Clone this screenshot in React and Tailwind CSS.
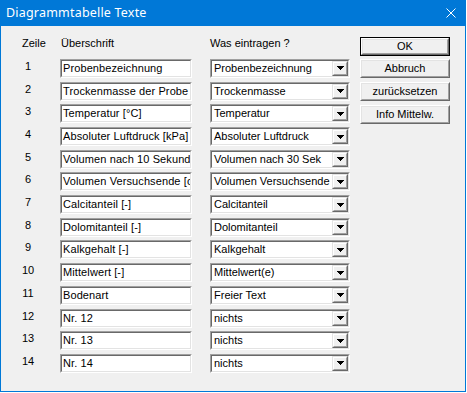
import React from "react";

const rows = [
  ["Probenbezeichnung", "Probenbezeichnung"],
  ["Trockenmasse der Probe [g]", "Trockenmasse"],
  ["Temperatur [°C]", "Temperatur"],
  ["Absoluter Luftdruck [kPa]", "Absoluter Luftdruck"],
  ["Volumen nach 10 Sekunden [cm³]", "Volumen nach 30 Sek"],
  ["Volumen Versuchsende [cm³]", "Volumen Versuchsende"],
  ["Calcitanteil [-]", "Calcitanteil"],
  ["Dolomitanteil [-]", "Dolomitanteil"],
  ["Kalkgehalt [-]", "Kalkgehalt"],
  ["Mittelwert [-]", "Mittelwert(e)"],
  ["Bodenart", "Freier Text"],
  ["Nr. 12", "nichts"],
  ["Nr. 13", "nichts"],
  ["Nr. 14", "nichts"],
];

const buttons = ["OK", "Abbruch", "zurücksetzen", "Info Mittelw."];

function Sunken({ width, children }) {
  return (
    <div
      className={`h-[19px] ${width} border border-t-[#a0a0a0] border-l-[#a0a0a0] border-b-white border-r-white`}
    >
      <div className="h-full border border-t-[#696969] border-l-[#696969] border-b-[#e3e3e3] border-r-[#e3e3e3] bg-white flex">
        {children}
      </div>
    </div>
  );
}

function TextInput({ value }) {
  return (
    <Sunken width="w-[132px]">
      <div className="flex-1 min-w-0 pl-[1px] leading-[15px] overflow-hidden whitespace-nowrap tracking-[0.1px]">
        {value}
      </div>
    </Sunken>
  );
}

function Arrow() {
  return (
    <svg width="7" height="4" viewBox="0 0 7 4" shapeRendering="crispEdges">
      <path d="M0 0h7v1h-1v1h-1v1h-1v1h-1v-1h-1v-1h-1v-1h-1z" fill="#000" />
    </svg>
  );
}

function Select({ value }) {
  return (
    <Sunken width="w-[140px]">
      <div className="flex-1 min-w-0 pl-[2px] leading-[15px] overflow-hidden whitespace-nowrap">
        {value}
      </div>
      <div className="w-[16px] shrink-0 h-full border border-t-[#e3e3e3] border-l-[#e3e3e3] border-b-[#696969] border-r-[#696969]">
        <div className="h-full border border-t-white border-l-white border-b-[#a0a0a0] border-r-[#a0a0a0] bg-[#f0f0f0] flex items-center justify-center">
          <Arrow />
        </div>
      </div>
    </Sunken>
  );
}

function Button({ label, isDefault }) {
  const inner = (
    <div className="h-full border border-t-white border-l-white border-b-[#696969] border-r-[#696969]">
      <div className="h-full border border-t-[#e3e3e3] border-l-[#e3e3e3] border-b-[#a0a0a0] border-r-[#a0a0a0] bg-[#f0f0f0] flex items-center justify-center leading-[13px]">
        {label}
      </div>
    </div>
  );
  if (isDefault) {
    return <div className="w-[90px] h-[19px] border border-[#000]">{inner}</div>;
  }
  return <div className="w-[90px] h-[19px]">{inner}</div>;
}

export default function App() {
  return (
    <div
      className="w-[467px] h-[393px] bg-white text-[11px] text-black"
      style={{ fontFamily: '"Liberation Sans", Arial, sans-serif' }}
    >
      <div className="w-[466px] h-[392px] bg-[#0078d7] flex flex-col">
        <div className="h-[26px] flex items-center justify-between pl-[6px] pr-[10px] text-white">
          <span
            className="text-[12.5px] tracking-[0.2px] leading-[16px]"
            style={{ fontFamily: '"Noto Sans", "Liberation Sans", sans-serif' }}
          >
            Diagrammtabelle Texte
          </span>
          <svg width="10" height="10" viewBox="0 0 10 10">
            <path d="M0.5 0.5L9.5 9.5M9.5 0.5L0.5 9.5" stroke="#fff" strokeWidth="1" />
          </svg>
        </div>
        <div className="flex-1 mx-px mb-px bg-[#f0f0f0] pt-[10.3px] pl-[21px]">
          <div className="grid grid-cols-[38px_150px_150px_90px] auto-rows-[22.7px]">
            <div className="leading-[15px]">Zeile</div>
            <div className="leading-[15px] pl-[1px]">Überschrift</div>
            <div className="leading-[15px]">Was eintragen ?</div>
            <div className="row-span-5 flex flex-col">
              {buttons.map((b, i) => (
                <div key={b} className="h-[22.7px] pt-[0.5px]">
                  <Button label={b} isDefault={i === 0} />
                </div>
              ))}
            </div>
            {rows.map(([t, s], i) => (
              <React.Fragment key={i}>
                <div className="w-[12px] text-center leading-[15px]">{i + 1}</div>
                <div>
                  <TextInput value={t} />
                </div>
                <div>
                  <Select value={s} />
                </div>
                {i >= 4 ? <div /> : null}
              </React.Fragment>
            ))}
          </div>
        </div>
      </div>
    </div>
  );
}
